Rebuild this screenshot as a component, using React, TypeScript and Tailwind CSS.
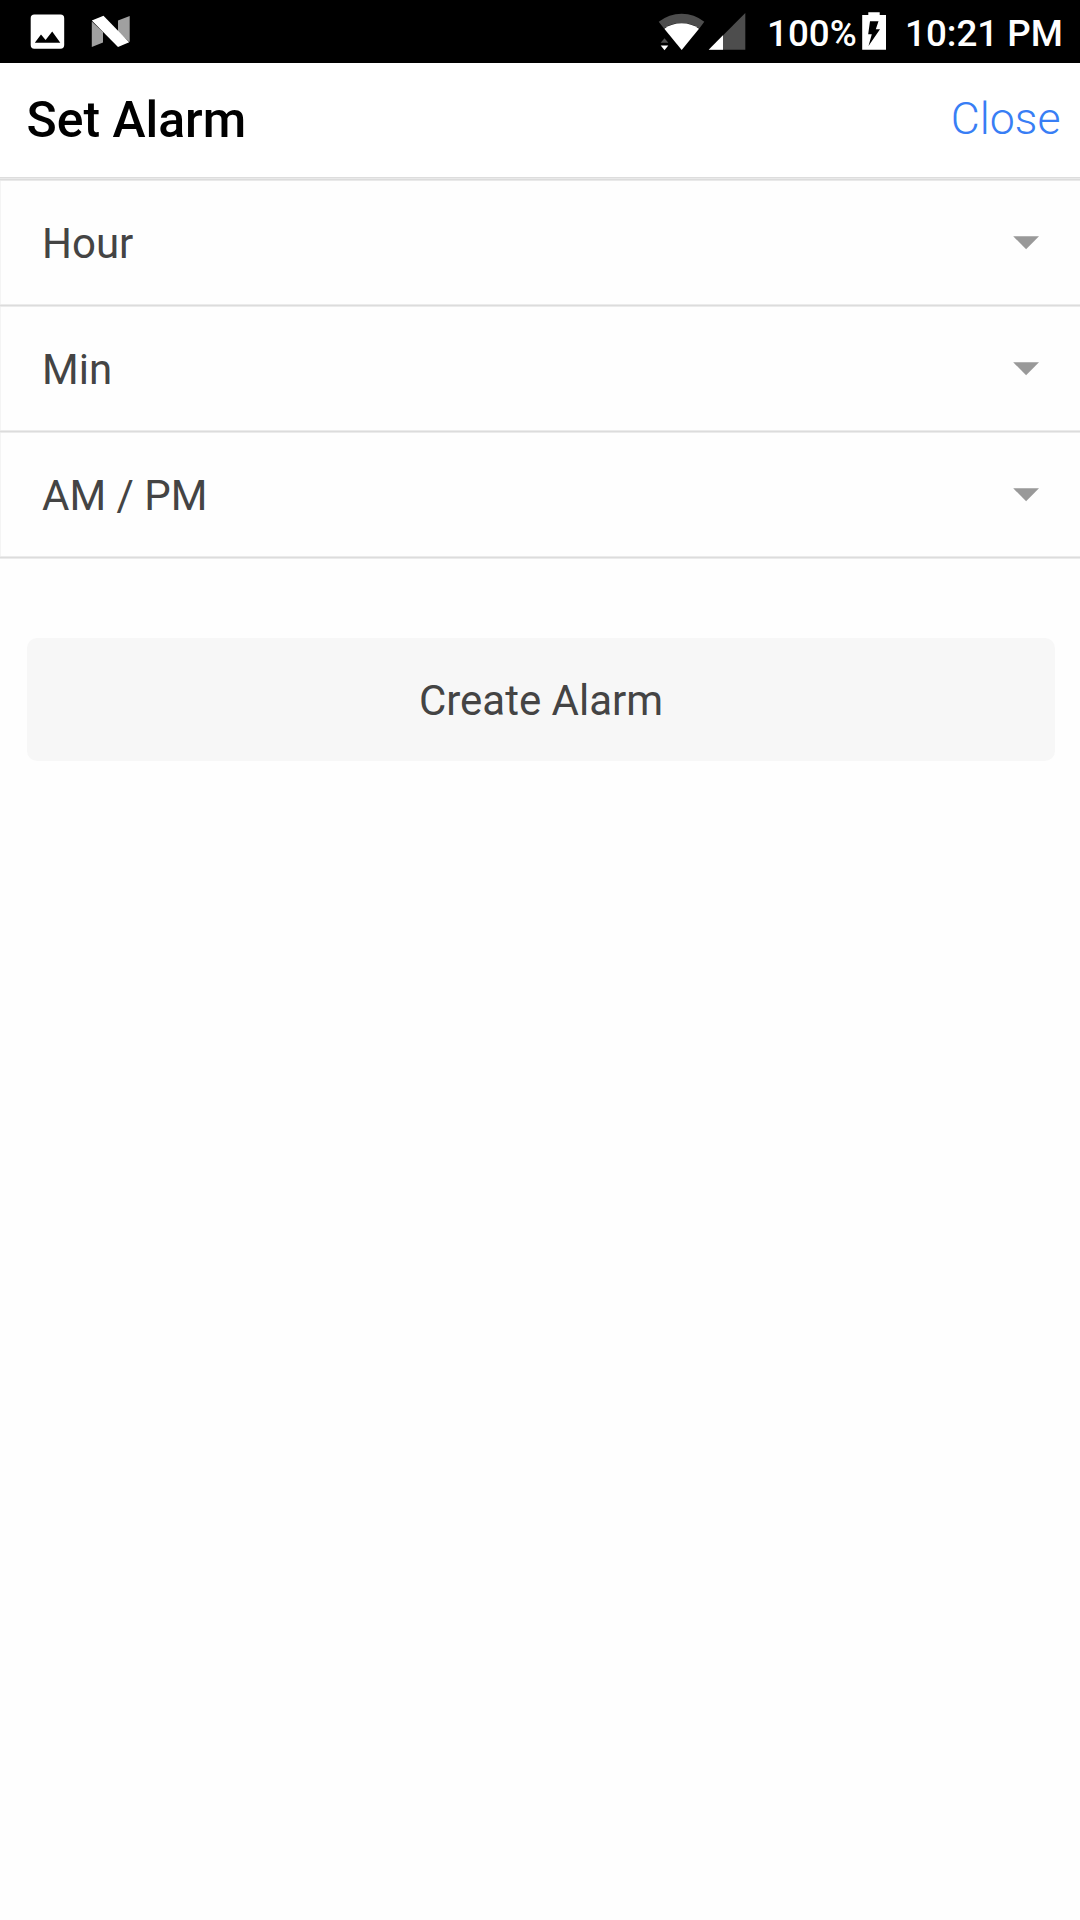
const fields = ['Hour', 'Min', 'AM / PM'];

function StatusBar() {
  return (
    <div className="flex h-[63px] items-start bg-black text-white">
      <svg className="ml-[30px] mt-[14px] h-[35px] w-[35px] shrink-0" viewBox="0 0 35 35">
        <path
          fillRule="evenodd"
          fill="#fff"
          d="M4.5 .5H30.5a3.7 3.7 0 0 1 3.7 3.7V31a3.7 3.7 0 0 1-3.7 3.7H4.5A3.7 3.7 0 0 1 .7 31V4.2A3.7 3.7 0 0 1 4.5 .5ZM4.8 28.7H30.3L22.2 17.6 15.6 26.1 11 20.5Z"
        />
      </svg>
      <svg className="ml-[26px] mt-[15px] h-[33px] w-[40px] shrink-0" viewBox="0 0 40 33">
        <path fill="#a0a0a0" d="M.8 6.5L12 17V27.5L.8 32ZM27 5.5L38.7 1V27L27 17Z" />
        <path fill="#fff" d="M.8 5.5L12.5 .8 38.2 27.2 27 32Z" />
      </svg>
      <svg className="ml-[527px] mt-[13px] h-[38px] w-[47px] shrink-0" viewBox="0 0 47 38">
        <path fill="#4d4d4d" d="M.7 8.8Q11 .7 23.7 .7T46.3 8.8L41.3 15.5Q34 10 23.5 10T6 15.5Z" />
        <path fill="#fff" d="M6.3 15.7Q13.5 10.2 23.6 10.2T41 15.7L23.7 37Z" />
        <path fill="#4d4d4d" d="M2.7 29.8L6.5 25.3 10.3 29.8Z" />
        <path fill="#fff" d="M2.7 32.5H10.3L6.5 37.2Z" />
      </svg>
      <svg className="ml-[3px] mt-[13px] h-[37px] w-[38px] shrink-0" viewBox="0 0 38 37">
        <path fill="#4d4d4d" d="M37.3 0V36.7H.7Z" />
        <path fill="#fff" d="M15 22.2V36.7H.7Z" />
      </svg>
      <span className="ml-[21px] mt-[12px] w-[95px] shrink-0 whitespace-nowrap text-[36.75px] font-medium leading-[43px]">100%</span>
      <svg className="mt-[12px] h-[38px] w-[25px] shrink-0" viewBox="0 0 25 38">
        <path
          fillRule="evenodd"
          fill="#fff"
          d="M.2 3H6.3V.3H17.7V3H24V37.7H.2ZM8 9.2H16.5L13.8 17.3H18L6.5 34 9.8 22.3H6.2Z"
        />
      </svg>
      <span className="ml-[18px] mt-[12px] whitespace-nowrap text-[36.75px] font-medium leading-[43px]">10:21 PM</span>
    </div>
  );
}

export default function App() {
  return (
    <div className="min-h-[1920px] w-[1080px] overflow-hidden bg-[#fefefe] font-['Roboto',sans-serif]">
      <StatusBar />
      <header className="flex h-[114px] items-start justify-between bg-white pl-[26.5px] pr-[19.5px]">
        <h1 className="mt-[28px] text-[49.875px] font-medium leading-[58px] text-black">Set Alarm</h1>
        <button className="mt-[30px] text-[44.625px] font-light leading-[52px] text-[#387ef5]">Close</button>
      </header>
      <div className="h-[4px] bg-[linear-gradient(#dddddd_1px,#e9e9e9_1px_2px,#dcdcdc_2px_3px,#e9e9e9_3px)]" />
      {fields.map((label) => (
        <div key={label}>
          <button className="flex h-[123px] w-full items-center justify-between border-l border-l-[#f4f4f4] pl-[41px] pr-[40px] text-left">
            <span className="pt-[2px] text-[42px] leading-[50px] text-[#444444]">{label}</span>
            <svg className="h-[14px] w-[27px]" viewBox="0 0 27 14">
              <path fill="#999" d="M.2 .3H26L13.1 13.3Z" />
            </svg>
          </button>
          <div className="h-[3px] bg-[linear-gradient(#ebebeb_1px,#dcdcdc_1px_2px,#ebebeb_2px)]" />
        </div>
      ))}
      <button className="ml-[27px] mt-[79px] flex h-[123px] w-[1028px] items-center justify-center rounded-[10px] bg-[#f7f7f7] pt-[2px] text-[42px] leading-[50px] text-[#444444]">
        Create Alarm
      </button>
    </div>
  );
}
